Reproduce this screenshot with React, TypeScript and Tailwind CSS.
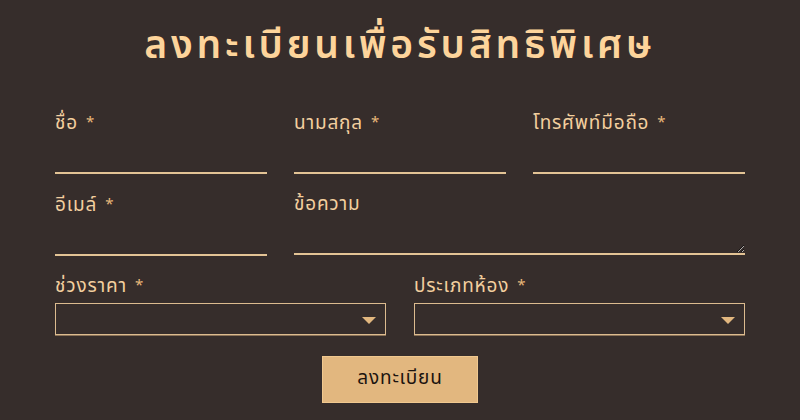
import { useState } from 'react'

function Label({ text, required }: { text: string; required?: boolean }) {
  return (
    <label className="block text-[19px] leading-[22px] tracking-[0.8px] text-[#f3cf9f]">
      {text}
      {required && <span className="ml-[8px] align-[2px] text-[15px] text-[#e9b87a]">*</span>}
    </label>
  )
}

function LineField({ text, required, area }: { text: string; required?: boolean; area?: boolean }) {
  const [value, setValue] = useState('')
  return (
    <div className="flex flex-col">
      <Label text={text} required={required} />
      {area ? (
        <textarea
          value={value}
          onChange={(e) => setValue(e.target.value)}
          rows={1}
          className="mt-[9px] h-[30px] w-full resize-y border-0 border-b-2 border-[#e3c395] bg-transparent text-white outline-none"
        />
      ) : (
        <input
          value={value}
          onChange={(e) => setValue(e.target.value)}
          className="mt-[9px] h-[30px] w-full border-0 border-b-2 border-[#e3c395] bg-transparent text-white outline-none"
        />
      )}
    </div>
  )
}

function SelectField({ text }: { text: string }) {
  return (
    <div className="flex flex-col">
      <Label text={text} required />
      <div className="relative mt-[5px] h-[32px] border border-[#dcbb8f] shadow-[0_1px_0_#8b7257]">
        <select className="h-full w-full appearance-none bg-transparent px-2 text-white outline-none">
          <option value=""></option>
        </select>
        <span className="pointer-events-none absolute right-[9px] top-[13px] h-0 w-0 border-x-[7px] border-t-[7px] border-x-transparent border-t-[#e2b77f]" />
      </div>
    </div>
  )
}

export default function App() {
  return (
    <div
      className="h-[420px] w-[800px] bg-[#362d2b] px-[55px] pt-[22px]"
      style={{ fontFamily: '"Noto Sans Thai", "Noto Sans", sans-serif' }}
    >
      <h1 className="text-center text-[39px] font-semibold leading-[50px] tracking-[3.8px] text-[#fdd49b]">
        ลงทะเบียนเพื่อรับสิทธิพิเศษ
      </h1>

      <form className="mt-[40px]" onSubmit={(e) => e.preventDefault()}>
        <div className="grid grid-cols-3 gap-x-[27px]">
          <LineField text="ชื่อ" required />
          <LineField text="นามสกุล" required />
          <LineField text="โทรศัพท์มือถือ" required />
        </div>

        <div className="mt-[20px] grid grid-cols-3 gap-x-[27px]">
          <LineField text="อีเมล์" required />
          <div className="col-span-2">
            <LineField text="ข้อความ" area />
          </div>
        </div>

        <div className="mt-[19px] grid grid-cols-2 gap-x-[28px]">
          <SelectField text="ช่วงราคา" />
          <SelectField text="ประเภทห้อง" />
        </div>

        <div className="mt-[21px] flex justify-center">
          <button
            type="submit"
            className="h-[47px] w-[156px] border border-[#f0c88f] bg-[#e2b77f] text-[19px] tracking-[0.8px] text-[#1c1410]"
          >
            ลงทะเบียน
          </button>
        </div>
      </form>
    </div>
  )
}
